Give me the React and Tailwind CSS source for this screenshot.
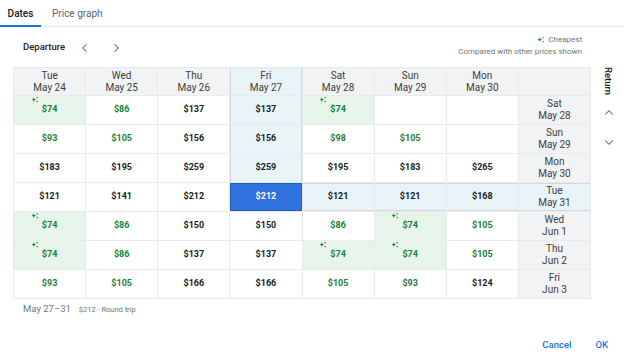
import React from 'react';

const departures = [
  ['Tue', 'May 24'],
  ['Wed', 'May 25'],
  ['Thu', 'May 26'],
  ['Fri', 'May 27'],
  ['Sat', 'May 28'],
  ['Sun', 'May 29'],
  ['Mon', 'May 30'],
];

// price, kind: c = cheapest (green bg + sparkle), g = green text, n = normal
const rows = [
  { label: ['Sat', 'May 28'], cells: [['$74', 'c'], ['$86', 'g'], ['$137', 'n'], ['$137', 'n'], ['$74', 'c'], ['', 'n'], ['', 'n']] },
  { label: ['Sun', 'May 29'], cells: [['$93', 'g'], ['$105', 'g'], ['$156', 'n'], ['$156', 'n'], ['$98', 'g'], ['$105', 'g'], ['', 'n']] },
  { label: ['Mon', 'May 30'], cells: [['$183', 'n'], ['$195', 'n'], ['$259', 'n'], ['$259', 'n'], ['$195', 'n'], ['$183', 'n'], ['$265', 'n']] },
  { label: ['Tue', 'May 31'], cells: [['$121', 'n'], ['$141', 'n'], ['$212', 'n'], ['$212', 'n'], ['$121', 'n'], ['$121', 'n'], ['$168', 'n']] },
  { label: ['Wed', 'Jun 1'], cells: [['$74', 'c'], ['$86', 'g'], ['$150', 'n'], ['$150', 'n'], ['$86', 'g'], ['$74', 'c'], ['$105', 'g']] },
  { label: ['Thu', 'Jun 2'], cells: [['$74', 'c'], ['$86', 'g'], ['$137', 'n'], ['$137', 'n'], ['$74', 'c'], ['$74', 'c'], ['$105', 'g']] },
  { label: ['Fri', 'Jun 3'], cells: [['$93', 'g'], ['$105', 'g'], ['$166', 'n'], ['$166', 'n'], ['$105', 'g'], ['$93', 'g'], ['$124', 'n']] },
];

const SEL_COL = 3;
const SEL_ROW = 3;

function Sparkle({ className = '' }) {
  return (
    <svg viewBox="0 0 10 10" className={className} fill="currentColor">
      <path d="M3.5 1.5 L4.3 3.7 L6.5 4.5 L4.3 5.3 L3.5 7.5 L2.7 5.3 L0.5 4.5 L2.7 3.7 Z" />
      <circle cx="7.6" cy="2.2" r="0.9" />
      <circle cx="7.6" cy="6.8" r="0.9" />
    </svg>
  );
}

function Chevron({ dir, className = '' }) {
  const d = {
    left: 'M10 3 L5 8 L10 13',
    right: 'M6 3 L11 8 L6 13',
    up: 'M3 10 L8 5 L13 10',
    down: 'M3 6 L8 11 L13 6',
  }[dir];
  return (
    <svg viewBox="0 0 16 16" className={className} fill="none" stroke="currentColor" strokeWidth="1.4">
      <path d={d} />
    </svg>
  );
}

function DayLabel({ day, date }) {
  return (
    <div className="flex flex-col items-center leading-[12px] text-[10px] text-[#3c4043]">
      <span>{day}</span>
      <span>{date}</span>
    </div>
  );
}

export default function App() {
  const colLine = 'shadow-[inset_1px_0_0_#d5d7db,inset_-1px_0_0_#d5d7db]';
  const rowLine = 'shadow-[inset_0_1px_0_#d5d7db,inset_0_-1px_0_#d5d7db]';

  return (
    <div className="w-[624px] h-[357px] bg-white overflow-hidden" style={{ fontFamily: 'Roboto, "Liberation Sans", sans-serif' }}>
      {/* Tabs */}
      <div className="flex h-[27px] border-b border-[#e8eaed] text-[10px]">
        <div className="relative w-[41px] flex items-center justify-center text-[#202124] font-medium">
          Dates
          <div className="absolute left-0 right-0 bottom-[-1px] h-[2px] bg-[#1a73e8]"></div>
        </div>
        <div className="flex items-center pl-[11px] text-[#5f6368]">Price graph</div>
      </div>

      {/* Toolbar */}
      <div className="flex h-[40px] pl-[23px] pr-[42px]">
        <div className="flex items-center gap-[14px] pt-[1px]">
          <span className="text-[9.5px] font-medium text-[#202124]">Departure</span>
          <Chevron dir="left" className="w-[12px] h-[12px] text-[#5f6368]" />
          <Chevron dir="right" className="w-[12px] h-[12px] text-[#5f6368] ml-[5px]" />
        </div>
        <div className="ml-auto flex flex-col items-end pt-[7px] text-[8px] text-[#70757a] leading-[12px]">
          <span className="flex items-center gap-[3px]">
            <Sparkle className="w-[8px] h-[8px] text-[#188038]" />
            Cheapest
          </span>
          <span>Compared with other prices shown</span>
        </div>
      </div>

      {/* Table + Return column */}
      <div className="flex pl-[13px]">
        <div className="grid grid-cols-8 w-[578px] border-l border-t border-[#e8eaed]">
          {departures.map(([d, dt], i) => (
            <div
              key={dt}
              className={`h-[28px] flex items-center justify-center border-r border-b border-[#e8eaed] ${i === SEL_COL ? `bg-[#e8f4f8] ${colLine}` : 'bg-[#f1f3f4]'}`}
            >
              <DayLabel day={d} date={dt} />
            </div>
          ))}
          <div className="h-[28px] bg-[#f1f3f4] border-r border-b border-[#e8eaed]"></div>

          {rows.map((row, r) => (
            <React.Fragment key={r}>
              {row.cells.map(([price, kind], c) => {
                const selected = r === SEL_ROW && c === SEL_COL;
                const inCol = c === SEL_COL && r < SEL_ROW;
                const inRow = r === SEL_ROW && c > SEL_COL;
                let bg = 'bg-white';
                if (kind === 'c') bg = 'bg-[#e6f4ea]';
                if (inCol || inRow) bg = 'bg-[#e8f4f8]';
                if (selected) bg = 'bg-[#3071de]';
                let line = '';
                if (inCol) line = colLine;
                if (inRow) line = rowLine;
                if (selected) line = 'shadow-[inset_0_0_0_1px_#1f5fc9]';
                let color = 'text-[#202124]';
                if (kind === 'c' || kind === 'g') color = 'text-[#188038]';
                if (selected) color = 'text-white';
                return (
                  <div
                    key={c}
                    className={`relative h-[29px] flex items-center justify-center border-r border-b border-[#e8eaed] ${bg} ${line}`}
                  >
                    <span className={`relative text-[9px] font-bold ${color}`}>
                      {kind === 'c' && (
                        <Sparkle className="absolute left-[-11px] top-[-7px] w-[8px] h-[8px] text-[#188038]" />
                      )}
                      {price}
                    </span>
                  </div>
                );
              })}
              <div
                className={`h-[29px] flex items-center justify-center border-r border-b border-[#e8eaed] ${r === SEL_ROW ? `bg-[#e8f4f8] ${rowLine}` : 'bg-[#f1f3f4]'}`}
              >
                <DayLabel day={row.label[0]} date={row.label[1]} />
              </div>
            </React.Fragment>
          ))}
        </div>

        <div className="flex-1 flex flex-col items-center">
          <div className="h-[28px] flex items-center justify-center text-[9.5px] font-medium text-[#202124] [writing-mode:vertical-rl]">
            Return
          </div>
          <Chevron dir="up" className="w-[12px] h-[12px] text-[#5f6368] mt-[12px] ml-[2px]" />
          <Chevron dir="down" className="w-[12px] h-[12px] text-[#5f6368] mt-[17px] ml-[2px]" />
        </div>
      </div>

      {/* Summary */}
      <div className="flex items-baseline gap-[8px] pl-[23px] pt-[3px]">
        <span className="text-[9.5px] text-[#70757a]">May 27–31</span>
        <span className="text-[7.5px] text-[#70757a]">$212 · Round trip</span>
      </div>

      {/* Actions */}
      <div className="flex justify-end gap-[24px] pr-[16px] pt-[22px] text-[9.5px] font-medium text-[#1a73e8]">
        <span>Cancel</span>
        <span>OK</span>
      </div>
    </div>
  );
}
